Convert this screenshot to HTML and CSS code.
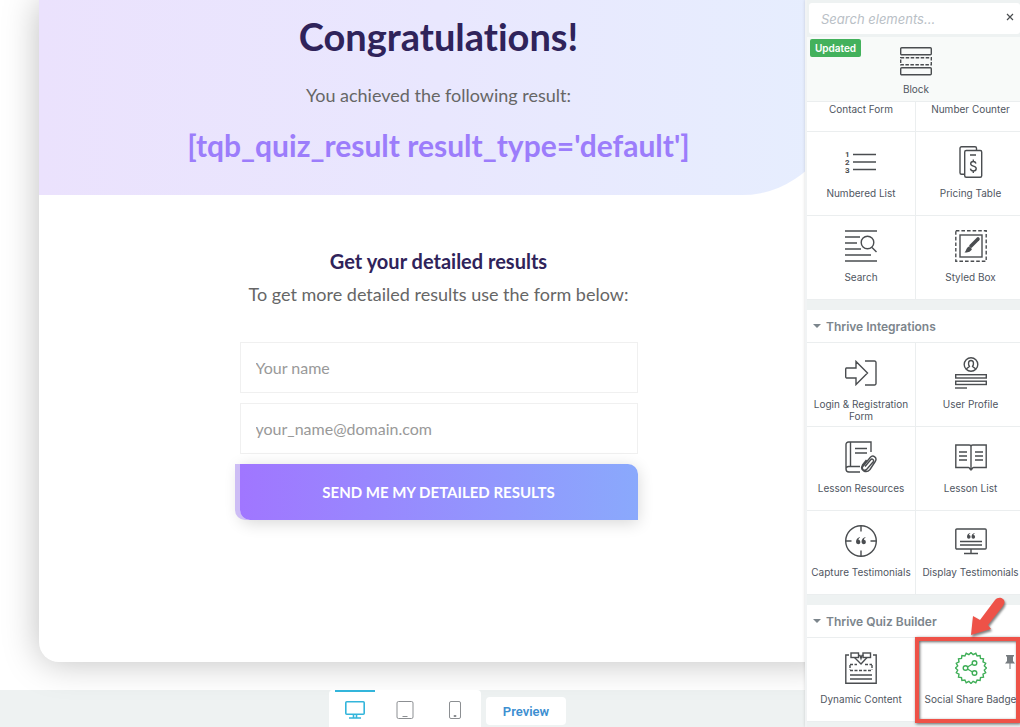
FILE: index.html
```
<!DOCTYPE html>
<html lang="en">
<head>
  <meta charset="UTF-8" />
  <meta name="viewport" content="width=device-width, initial-scale=1.0"/>
  <title>Quiz results page</title>
  <link rel="stylesheet" href="styles.css">
</head>
<body>

  <main class="editor">
    <div class="canvas">
      <article class="page">
        <header class="hero">
          <h1>Congratulations!</h1>
          <p>You achieved the following result:</p>
          <div class="result">[tqb_quiz_result result_type='default']</div>
        </header>

        <section class="optin">
          <h2>Get your detailed results</h2>
          <p>To get more detailed results use the form below:</p>
          <form class="optin-form">
            <input type="text" name="name" placeholder="Your name" aria-label="Your name">
            <input type="email" name="email" placeholder="your_name@domain.com" aria-label="Email">
            <button type="submit">SEND ME MY DETAILED RESULTS</button>
          </form>
        </section>
      </article>
    </div>

    <footer class="bottom-bar">
      <div class="devices">
        <button type="button" class="device active" aria-label="Desktop">
          <svg width="20" height="18" viewBox="0 0 20 18"><rect x="0.8" y="0.8" width="18.4" height="12.4" rx="1"/><path d="M8.5 13.5v3M11.5 13.5v3M4 17h12"/></svg>
        </button>
        <button type="button" class="device" aria-label="Tablet">
          <svg width="18" height="18" viewBox="0 0 18 18"><rect x="1" y="0.5" width="16" height="17" rx="1.5"/><path d="M6.5 15.5h5"/></svg>
        </button>
        <button type="button" class="device" aria-label="Mobile">
          <svg width="12" height="18" viewBox="0 0 12 18"><rect x="0.5" y="0.5" width="11" height="17" rx="1.5"/><path d="M5 14.5h2v1H5z"/></svg>
        </button>
      </div>
      <button type="button" class="preview">Preview</button>
    </footer>
  </main>

  <aside class="sidebar">
    <div class="search">
      <input type="text" placeholder="Search elements..." aria-label="Search elements">
      <button type="button" aria-label="Clear search">
        <svg width="8" height="8" viewBox="0 0 8 8"><path d="M1 1l6 6M7 1L1 7"/></svg>
      </button>
    </div>

    <button type="button" class="element block">
      <span class="updated">Updated</span>
      <svg class="icon" viewBox="0 0 32 32"><rect x="0.7" y="1.7" width="30.6" height="7" rx="1"/><rect x="0.7" y="11.7" width="30.6" height="7" stroke-dasharray="3.5 1.5"/><rect x="0.7" y="21.7" width="30.6" height="7" rx="1"/></svg>
      Block
    </button>

    <div class="elements">
      <button type="button" class="element cut">Contact Form</button>
      <button type="button" class="element cut">Number Counter</button>
      <button type="button" class="element">
        <svg class="icon" viewBox="0 0 32 32"><path d="M8 8.5h23M8 16h23M8 23.5h23"/><g class="digits"><text x="0" y="11">1</text><text x="0" y="19">2</text><text x="0" y="27">3</text></g></svg>
        Numbered List
      </button>
      <button type="button" class="element">
        <svg class="icon" viewBox="0 0 32 32"><path d="M9 28.3H6.5a1.5 1.5 0 0 1-1.5-1.5V2.2A1.5 1.5 0 0 1 6.5.7H20a1.5 1.5 0 0 1 1.5 1.5V4"/><rect x="9.7" y="4.5" width="17" height="26.8" rx="1.5"/><path d="M15 9h6M21 17.5c-.5-1.500-1.500-2-2.700-2-1.500 0-2.600.8-2.600 2.300 0 3.200 5.500 1.500 5.500 4.700 0 1.600-1.300 2.500-2.900 2.500-1.500 0-2.600-.8-2.900-2.300M18.300 13.500v2M18.300 25v2"/></svg>
        Pricing Table
      </button>
      <button type="button" class="element">
        <svg class="icon" viewBox="0 0 32 32"><path d="M0 1h32M0 7h15M0 13h12M0 19h16M0 25h26M0 31h32"/><circle cx="22.5" cy="12.5" r="6.3"/><path d="M27 17.500l4.500 4.500"/></svg>
        Search
      </button>
      <button type="button" class="element">
        <svg class="icon" viewBox="0 0 32 32"><rect x="0.8" y="0.8" width="30.4" height="30.4" stroke-dasharray="3.6 2"/><rect x="5" y="5" width="22" height="22"/><path d="M16 16l7-7" stroke-width="3.6" stroke-linecap="round"/><path class="solid" d="M14 16.500l3 2.500c-2 3.500-4.500 3.500-7.500 3.500 2-1.500 1.500-5 4.500-6z"/></svg>
        Styled Box
      </button>
    </div>

    <h3 class="group"><button type="button">Thrive Integrations</button></h3>
    <div class="elements">
      <button type="button" class="element">
        <svg class="icon" viewBox="0 0 32 32"><path d="M1.500 11H11V4.500L22.500 16 11 27.500V21H1.500a1 1 0 0 1-.8-1v-8a1 1 0 0 1 .8-1zM20 4h9.500a1.500 1.500 0 0 1 1.500 1.500v21a1.500 1.500 0 0 1-1.500 1.500H20"/></svg>
        Login &amp; Registration Form
      </button>
      <button type="button" class="element">
        <svg class="icon" viewBox="0 0 32 32"><circle cx="16" cy="7.5" r="6.8"/><path d="M11.500 12.500c0-2 2.500-2 3-3-1.500-2-1.500-6 1.500-6s3 4 1.500 6c.5 1 3 1 3 3"/><rect x="0.7" y="17.7" width="30.6" height="3.3"/><rect x="0.7" y="24.2" width="30.6" height="3.3"/><path d="M0 31h12"/></svg>
        User Profile
      </button>
      <button type="button" class="element">
        <svg class="icon" viewBox="0 0 32 32"><path d="M15 31H4a3 3 0 0 1-3-3V3.500A2.500 2.500 0 0 1 3.500 1H26v10M5.500 1v24.500M1 28a2.500 2.500 0 0 1 2.500-2.500H15M10 7.500h12M10 12h12"/><path d="M20 25.500l5.500-6.500c1.700-2 4 0 2.500 2l-6 7c-2.700 3-6.200 0-3.800-3l7-8.500c2.800-3.200 7.500.2 5 4L25 28.500c-4 4.500-10.500.5-7.500-4.500l4-5"/></svg>
        Lesson Resources
      </button>
      <button type="button" class="element">
        <svg class="icon" viewBox="0 0 32 32"><path d="M.8 4h13.500c1 0 1.700.8 1.700 1.500C16 4.800 16.700 4 17.700 4h13.500v22.500H18.500c-1.500 0-1.500 2.500-2.500 2.500s-1-2.500-2.500-2.500H.8zM16 5.500V28M4 11h8M4 15h8M4 19h8M20 11h8M20 15h8M20 19h8"/></svg>
        Lesson List
      </button>
      <button type="button" class="element">
        <svg class="icon" viewBox="0 0 32 32"><circle cx="16" cy="16" r="15.3"/><path d="M16 .5v6M16 25.500v6M.5 16h6M25.500 16h6"/><path class="solid" d="M15 12c-2.500.5-4 2.500-4 5a2.200 2.200 0 1 0 2.500-2.200c0-1 .5-1.800 1.500-2.300zM20.500 12c-2.500.5-4 2.500-4 5a2.200 2.200 0 1 0 2.500-2.200c0-1 .5-1.800 1.500-2.300z"/></svg>
        Capture Testimonials
      </button>
      <button type="button" class="element">
        <svg class="icon" viewBox="0 0 32 32"><rect x="0.8" y="4" width="30.4" height="20" rx="1"/><path d="M5 16.500h22M5 20h22M16 24v4M9 28.500h14"/><path class="solid" d="M15.200 8c-2 .4-3.200 1.900-3.200 3.900a1.800 1.800 0 1 0 2-1.800c0-.7.400-1.200 1.200-1.500zM19.700 8c-2 .4-3.200 1.900-3.200 3.900a1.800 1.800 0 1 0 2-1.800c0-.7.400-1.200 1.200-1.500z"/></svg>
        Display Testimonials
      </button>
    </div>

    <h3 class="group"><button type="button">Thrive Quiz Builder</button></h3>
    <div class="elements">
      <button type="button" class="element">
        <svg class="icon" viewBox="0 0 32 32"><path d="M4 3H.8v28.200h30.400V3H28M5 23h22M5 27h22"/><rect x="6" y="1" width="7.5" height="4.5"/><rect x="18" y="1" width="7.5" height="4.5"/><path d="M9.500 5.500L16 12l6-6.500M13.500 3.500h1.500l1 3 1-3h1.500"/><path d="M5 12.500h7M20 12.500h7M5 18.500h22M5 13v5M27 13v5" stroke-dasharray="3 1.5"/></svg>
        Dynamic Content
      </button>
      <button type="button" class="element highlighted">
        <svg class="icon green" viewBox="0 0 32 32">
          <polygon transform="translate(16 16)" points="15.5,0 13.3,2.1 14.7,4.8 12,6.1 12.5,9.1 9.5,9.5 9.1,12.5 6.1,12 4.8,14.7 2.1,13.3 0,15.5 -2.1,13.3 -4.8,14.7 -6.1,12 -9.1,12.5 -9.5,9.5 -12.5,9.1 -12,6.1 -14.7,4.8 -13.3,2.1 -15.5,0 -13.3,-2.1 -14.7,-4.8 -12,-6.1 -12.5,-9.1 -9.5,-9.5 -9.1,-12.5 -6.1,-12 -4.8,-14.7 -2.1,-13.3 0,-15.5 2.1,-13.3 4.8,-14.7 6.1,-12 9.1,-12.5 9.5,-9.5 12.5,-9.1 12,-6.1 14.7,-4.8 13.3,-2.1"/>
          <circle cx="10.5" cy="16" r="2.3"/><circle cx="19.5" cy="11" r="2.3"/><circle cx="19.5" cy="21" r="2.3"/><path d="M12.500 15l5-3M12.500 17l5 3"/>
        </svg>
        Social Share Badge
        <svg class="pin" width="10" height="14" viewBox="0 0 10 14"><path d="M1 0h8v1.500H8V6l2 2.500H5.500V14h-1V8.500H0L2 6V1.500H1z"/></svg>
        <span class="frame"></span>
        <svg class="arrow" width="42" height="44" viewBox="0 0 42 44"><path d="M5 41L7 22l7 4L29 6c4-5 13-1 8 6L22 31l3 4z"/></svg>
      </button>
    </div>
  </aside>

</body>
</html>
```
FILE: styles.css
```
* {
  box-sizing: border-box;
}
body {
  margin: 0;
  display: flex;
  height: 100vh;
  overflow: hidden;
  background: #eef2f2;
  font-family: Lato, sans-serif;
}
h1, h2, h3, p {
  margin: 0;
}
button {
  padding: 0;
  border: none;
  background: none;
  font-family: inherit;
  cursor: pointer;
}
svg {
  fill: none;
  stroke: #4a4d50;
}

/* editor */
.editor {
  flex: 1;
  min-width: 0;
  display: flex;
  flex-direction: column;
  overflow: hidden;
}
.canvas {
  flex: 1;
  min-height: 0;
  background: #fff;
}
.page {
  height: calc(100% - 28px);
  margin: 0 -33px 0 39px;
  background: #fff;
  border-radius: 0 0 20px 20px;
  box-shadow: 0 0 36px rgba(0, 0, 0, 0.26);
  text-align: center;
  color: #666;
}
.hero {
  padding: 12px 20px 28px;
  background: linear-gradient(90deg, #ebe2fd, #e9e7fe 50%, #e6eefe);
  border-radius: 0 0 96px 0;
}
.hero h1 {
  line-height: 48px;
  font-size: 38px;
  font-weight: 700;
  font-variant-ligatures: none;
  color: #2f235a;
}
.hero p {
  margin-top: 21px;
  line-height: 28px;
  font-size: 18px;
}
.result {
  margin-top: 14px;
  line-height: 44px;
  font-size: 30px;
  font-weight: 700;
  color: #9c7dfb;
}
.optin {
  padding: 49px 20px 0;
}
.optin h2 {
  line-height: 34px;
  font-size: 20px;
  font-weight: 700;
  color: #2f235a;
}
.optin p {
  line-height: 32px;
  font-size: 18px;
}
.optin-form {
  display: flex;
  flex-direction: column;
  gap: 10px;
  width: 398px;
  margin: 32px auto 0;
}
.optin-form input {
  height: 51px;
  padding: 0 15px;
  border: 1px solid #f0f0f0;
  background: #fff;
  font-family: inherit;
  font-size: 16px;
}
.optin-form input::placeholder {
  color: #999;
}
.optin-form button {
  height: 56px;
  border-radius: 0 10px 0 10px;
  background: linear-gradient(90deg, #a076ff, #8aa9fc);
  box-shadow: -5px 0 0 #cdbdf5, 0 3px 16px rgba(0, 0, 0, 0.16);
  color: #fff;
  font-size: 15px;
  font-weight: 700;
}

/* bottom bar */
.bottom-bar {
  display: flex;
  justify-content: center;
  gap: 5px;
  height: 37px;
  padding-left: 90px;
  font-family: Roboto, sans-serif;
}
.devices {
  display: flex;
  padding: 0 1px;
  border-radius: 4px 4px 0 0;
  background: #fff;
}
.device {
  display: flex;
  align-items: center;
  justify-content: center;
  width: 40px;
  margin: 0 5px;
  border-top: 2px solid transparent;
}
.device.active {
  border-color: #33b5db;
}
.device svg {
  stroke: #8c8f92;
}
.device.active svg {
  stroke: #33b5db;
  stroke-width: 1.6;
}
.preview {
  width: 80px;
  height: 28px;
  margin-top: 7px;
  border-radius: 4px;
  background: #fff;
  color: #3d8fd1;
  font-size: 13px;
  font-weight: 600;
}

/* sidebar */
.sidebar {
  position: relative;
  flex: none;
  width: 220px;
  margin-right: -5px;
  border-left: 2px solid #f1f3f4;
  box-shadow: 0 0 3px rgba(0, 0, 0, 0.15);
  background: #eef2f2;
  font-family: Inter, sans-serif;
  color: #50565f;
}
.search {
  display: flex;
  height: 31px;
  margin: 3px 5px 3px 2px;
  padding-right: 6px;
  border-radius: 3px;
  background: #fff;
}
.search input {
  flex: 1;
  min-width: 0;
  padding: 0 12px;
  border: none;
  background: none;
  font: italic 13px Inter, sans-serif;
}
.search input::placeholder {
  color: #b9c0c6;
}
.search button {
  display: flex;
  padding-top: 10px;
}
.search svg {
  stroke-width: 1.2;
}
.element {
  position: relative;
  display: flex;
  flex-direction: column;
  align-items: center;
  gap: 9px;
  height: 84px;
  padding: 14px 2px 0;
  background: #fff;
  border-bottom: 1px solid #ebeeef;
  font-size: 10px;
  line-height: 12px;
  color: inherit;
}
.element.block {
  width: 100%;
  height: 65px;
  padding-top: 9px;
  gap: 5px;
  background: #f8faf9;
}
.element.cut {
  height: 30px;
  padding-top: 1px;
}
.elements {
  display: grid;
  grid-template-columns: 1fr 1fr;
}
.elements .element:nth-child(odd) {
  border-right: 1px solid #ebeeef;
}
.icon {
  flex: none;
  width: 32px;
  height: 32px;
  stroke-width: 1.4;
}
.icon .solid {
  fill: #4a4d50;
  stroke: none;
}
.digits {
  fill: #4a4d50;
  stroke: none;
  font: bold 8px Roboto, sans-serif;
}
.icon.green {
  stroke: #3fae57;
}
.updated {
  position: absolute;
  top: 2px;
  left: 3px;
  width: 51px;
  border-radius: 2px;
  background: #43b15c;
  color: #fff;
  font-size: 10px;
  font-weight: 600;
  line-height: 18px;
}
.group {
  height: 33px;
  margin-top: 10px;
  background: #fff;
  border-bottom: 1px solid #ebeeef;
}
.group button {
  display: flex;
  align-items: center;
  gap: 5px;
  width: 100%;
  height: 100%;
  padding-left: 6px;
  font-size: 12px;
  font-weight: 600;
  color: #7c858c;
}
.group button::before {
  content: "";
  border: 4px solid transparent;
  border-top-color: #7c858c;
  border-bottom: none;
}

/* callout over the badge element */
.pin {
  position: absolute;
  top: 17px;
  right: 10px;
  fill: #777c80;
  stroke: none;
}
.frame {
  position: absolute;
  inset: -1px 5px -2px -1px;
  border: 4px solid #ee5248;
  box-shadow: 1px 1px 3px rgba(0, 0, 0, 0.6), inset 1px 1px 3px rgba(0, 0, 0, 0.6);
}
.arrow {
  position: absolute;
  top: -44px;
  left: 50px;
  fill: #ee5248;
  stroke: none;
  filter: drop-shadow(1px 2px 1px rgba(0, 0, 0, 0.5));
}
```
